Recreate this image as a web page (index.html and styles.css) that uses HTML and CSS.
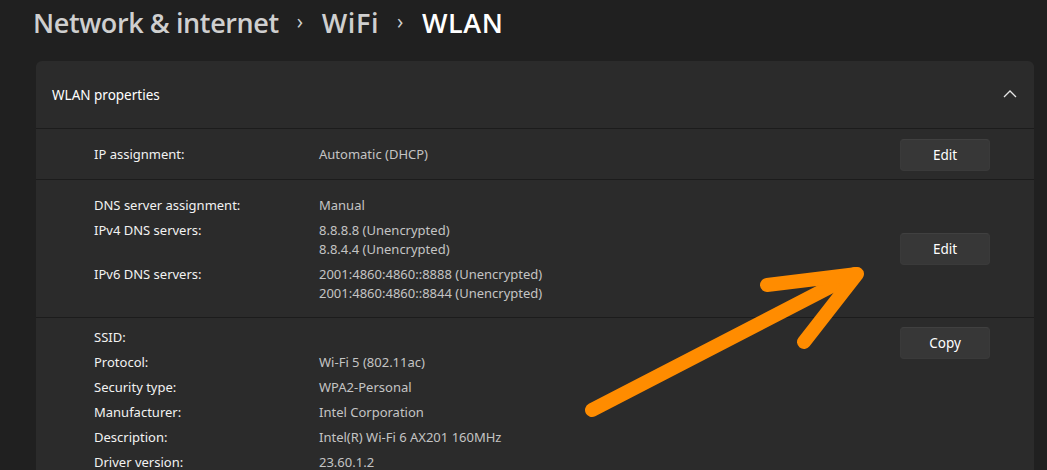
FILE: index.html
```html
<!DOCTYPE html>
<html lang="en">
<head>
<meta charset="utf-8">
<title>WLAN</title>
<link rel="stylesheet" href="styles.css">
</head>
<body>
<div class="page">
  <h1 class="crumbs">
    <span class="crumb">Network &amp; internet</span>
    <span class="sep">›</span>
    <span class="crumb short">WiFi</span>
    <span class="sep">›</span>
    <span class="crumb short current">WLAN</span>
  </h1>
  <section class="card">
    <div class="card-head">
      <span class="card-title">WLAN properties</span>
      <svg class="chev" width="14" height="8" viewBox="0 0 14 8"><path d="M1 7 L7 1 L13 7" fill="none" stroke="#e6e6e6" stroke-width="1.3"/></svg>
    </div>
    <div class="row row-one">
      <div class="props">
        <div class="label">IP assignment:</div>
        <div class="value">Automatic (DHCP)</div>
      </div>
      <button class="btn">Edit</button>
    </div>
    <div class="row row-dns">
      <div class="props">
        <div class="label">DNS server assignment:</div>
        <div class="value">Manual</div>
        <div class="label">IPv4 DNS servers:</div>
        <div class="value">8.8.8.8 (Unencrypted)<br>8.8.4.4 (Unencrypted)</div>
        <div class="label">IPv6 DNS servers:</div>
        <div class="value">2001:4860:4860::8888 (Unencrypted)<br>2001:4860:4860::8844 (Unencrypted)</div>
      </div>
      <button class="btn">Edit</button>
    </div>
    <div class="row row-info">
      <div class="props">
        <div class="label">SSID:</div>
        <div class="value"></div>
        <div class="label">Protocol:</div>
        <div class="value">Wi-Fi 5 (802.11ac)</div>
        <div class="label">Security type:</div>
        <div class="value">WPA2-Personal</div>
        <div class="label">Manufacturer:</div>
        <div class="value">Intel Corporation</div>
        <div class="label">Description:</div>
        <div class="value">Intel(R) Wi-Fi 6 AX201 160MHz</div>
        <div class="label">Driver version:</div>
        <div class="value">23.60.1.2</div>
      </div>
      <button class="btn">Copy</button>
    </div>
  </section>
  <svg class="annot" width="1047" height="470" viewBox="0 0 1047 470">
    <g fill="none" stroke="#ff8c00" stroke-width="14" stroke-linecap="round" stroke-linejoin="round">
      <path d="M592 410 L855 274"/>
      <path d="M767 285 L857 274 L804 342"/>
    </g>
  </svg>
</div>
</body>
</html>
```
FILE: styles.css
```css
html, body {
  margin: 0;
  padding: 0;
}
body {
  background: #202020;
  font-family: "Noto Sans", "Open Sans", sans-serif;
  color: #ffffff;
  width: 1047px;
  height: 470px;
  overflow: hidden;
}
.page {
  position: relative;
  padding: 0 13px 0 36px;
}
.crumbs {
  margin: 0;
  height: 61px;
  display: flex;
  align-items: center;
  padding-bottom: 16px;
  box-sizing: border-box;
  margin-left: -3px;
  font-family: "Open Sans", sans-serif;
  font-weight: 600;
  font-size: 27px;
  letter-spacing: -0.4px;
  color: #cfcfcf;
}
.crumb.short {
  letter-spacing: 0.6px;
}
.crumb.current {
  color: #ffffff;
}
.sep {
  font-size: 21px;
  font-weight: 400;
  color: #d0d0d0;
  margin: 0 19px 0 18px;
  position: relative;
  top: -2px;
}
.card {
  background: #2b2b2b;
  border-radius: 6px 6px 0 0;
  overflow: hidden;
}
.card-head {
  height: 67px;
  display: flex;
  align-items: center;
  justify-content: space-between;
  padding: 0 17px 0 16px;
  font-size: 13.5px;
}
.chev {
  margin-top: -2px;
}
.row {
  border-top: 1px solid #1c1c1c;
  display: flex;
  align-items: center;
  justify-content: space-between;
  padding: 0 44px 0 58px;
}
.row-one {
  height: 51px;
  box-sizing: border-box;
  padding-top: 1px;
}
.row-dns {
  height: 138px;
  box-sizing: border-box;
  padding-top: 1px;
}
.row-info {
  align-items: flex-start;
  padding-top: 9px;
  padding-bottom: 20px;
}
.props {
  display: grid;
  grid-template-columns: 225px auto;
  row-gap: 6px;
  font-size: 13px;
  line-height: 19px;
}
.label {
  color: #f2f2f2;
}
.value {
  color: #c4c4c4;
}
.row-info .props {
  padding-top: 1px;
}
.btn {
  width: 90px;
  height: 32px;
  border: 1px solid #3a3a3a;
  border-top-color: #404040;
  border-radius: 4px;
  background: #373737;
  color: #ffffff;
  font-family: "Noto Sans", sans-serif;
  font-size: 13.5px;
  padding: 0;
}
.annot {
  position: absolute;
  left: 0;
  top: 0;
  pointer-events: none;
}
```
